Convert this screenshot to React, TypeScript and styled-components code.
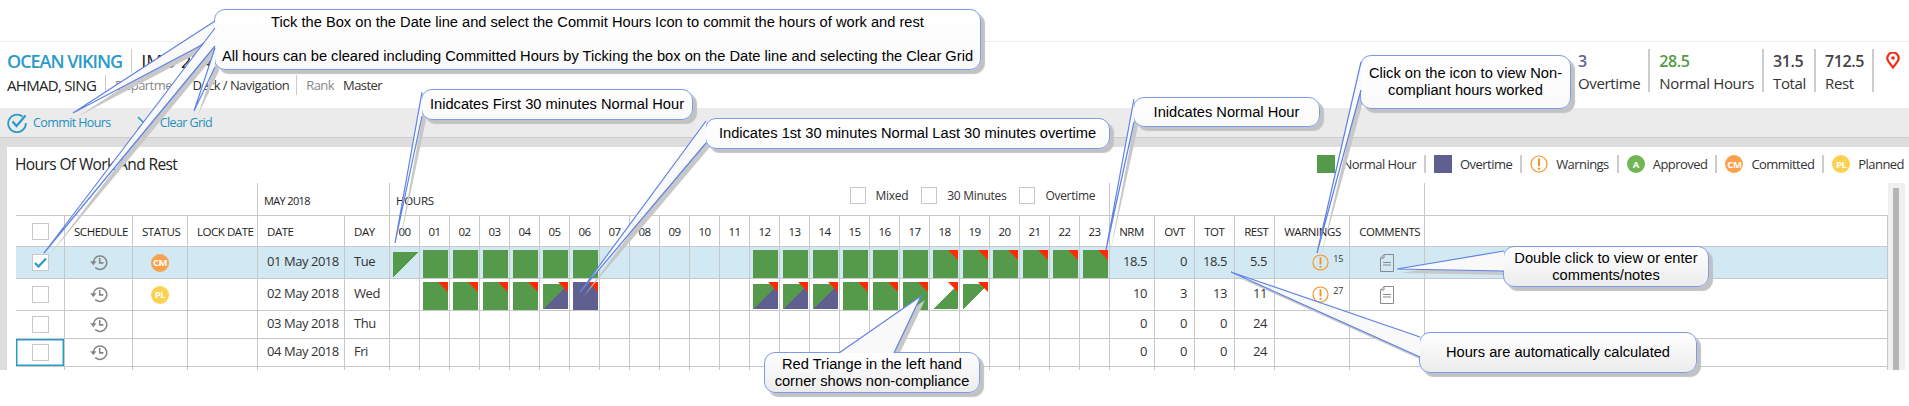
import React from "react";
import styled, { createGlobalStyle } from "styled-components";

const UI_FONT = `"Open Sans", "Noto Sans", sans-serif`;

const GlobalStyle = createGlobalStyle`
  html, body {
    margin: 0;
    padding: 0;
    background: #fff;
    font-family: ${UI_FONT};
    color: #222;
  }
`;

const Page = styled.div`
  position: relative;
  width: 1909px;
  height: 406px;
  overflow: hidden;
  background: #fff;
`;

const TopGap = styled.div`
  height: 42px;
  border-bottom: 1px solid #eee;
  box-sizing: border-box;
`;

const InfoBar = styled.header`
  display: flex;
  justify-content: space-between;
  height: 66px;
  padding: 7px 9px 0 7px;
  box-sizing: border-box;
`;

const InfoLeft = styled.div`
  display: flex;
  flex-direction: column;
`;

const InfoLine = styled.div`
  display: flex;
  align-items: center;
  height: 24px;
`;

const VesselName = styled.span`
  font-size: 18px;
  font-weight: 600;
  color: #2a9bc9;
  letter-spacing: -1px;
  padding-right: 9px;
  border-right: 1px solid #ccc;
  line-height: 24px;
`;

const VesselImo = styled.span`
  font-size: 18px;
  padding-left: 9px;
`;

const CrewName = styled.span`
  font-size: 15px;
  letter-spacing: -0.7px;
  padding-right: 9px;
  border-right: 1px solid #ccc;
  line-height: 20px;
`;

const FieldLabel = styled.span`
  font-size: 13px;
  letter-spacing: -0.55px;
  color: #888;
  margin: 0 9px;
`;

const FieldValue = styled.span<{ $divider?: boolean }>`
  font-size: 13px;
  letter-spacing: -0.55px;
  color: #333;
  line-height: 20px;
  ${(p) => p.$divider && "padding-right: 7px; border-right: 1px solid #ccc;"}
`;

const Stats = styled.div`
  display: flex;
  align-items: flex-start;
`;

const Stat = styled.div`
  height: 43px;
  padding: 0 8px 0 9px;
  border-right: 2px solid #ccc;
  display: flex;
  flex-direction: column;
  justify-content: space-between;
`;

const StatValue = styled.div<{ $color: string }>`
  font-size: 16px;
  font-weight: 600;
  line-height: 24px;
  color: ${(p) => p.$color};
  letter-spacing: -0.4px;
`;

const StatLabel = styled.div`
  font-size: 15px;
  line-height: 18px;
  letter-spacing: -0.35px;
  color: #333;
`;

const PinHolder = styled.div`
  margin: 3px 0 0 12px;
`;

const Toolbar = styled.div`
  display: flex;
  align-items: center;
  height: 30px;
  padding-left: 7px;
  box-sizing: border-box;
  background: #ebebeb;
  border-bottom: 1px solid #ccc;
`;

const ToolButton = styled.div<{ $width: number }>`
  display: flex;
  align-items: center;
  gap: 6px;
  width: ${(p) => p.$width}px;
  font-size: 12.5px;
  letter-spacing: -0.6px;
  color: #1f8fbf;
`;

const Workspace = styled.div`
  height: 232px;
  padding: 9px 0 0 7px;
  box-sizing: border-box;
  background: #ddd;
`;

const Panel = styled.section`
  height: 223px;
  background: #fff;
  display: flex;
  flex-direction: column;
`;

const PanelHead = styled.div`
  display: flex;
  justify-content: space-between;
  height: 36px;
  padding: 8px 5px 0 8px;
  box-sizing: border-box;
`;

const PanelTitle = styled.h2`
  margin: -2px 0 0;
  font-size: 15.5px;
  line-height: 22px;
  font-weight: 400;
  letter-spacing: -0.6px;
  color: #222;
`;

const Legend = styled.div`
  display: flex;
  align-items: center;
  height: 18px;
`;

const LegendItem = styled.div<{ $last?: boolean }>`
  display: flex;
  align-items: center;
  gap: 8px;
  height: 18px;
  padding: 0 ${(p) => (p.$last ? 0 : 8)}px 0 8px;
  font-size: 13px;
  letter-spacing: -0.55px;
  color: #333;
  ${(p) => !p.$last && "border-right: 2px solid #ccc;"}
`;

const Swatch = styled.span<{ $color: string }>`
  display: block;
  width: 18px;
  height: 18px;
  background: ${(p) => p.$color};
`;

const Badge = styled.span<{ $color: string; $size?: number }>`
  display: inline-flex;
  align-items: center;
  justify-content: center;
  width: ${(p) => p.$size ?? 18}px;
  height: ${(p) => p.$size ?? 18}px;
  border-radius: 50%;
  background: ${(p) => p.$color};
  color: #fff;
  font-size: 9.5px;
  font-weight: 700;
  letter-spacing: -0.4px;
`;

const GridRow = styled.div`
  display: flex;
  height: 187px;
  padding-left: 9px;
`;

const GridClip = styled.div`
  width: 1872px;
  height: 187px;
  overflow: hidden;
`;

const Grid = styled.table`
  width: 1872px;
  table-layout: fixed;
  border-collapse: separate;
  border-spacing: 0;
`;

const Scroller = styled.div`
  width: 17px;
  height: 187px;
  box-sizing: border-box;
  padding: 5px 6px 0 5px;
  background: #f0f0f0;
`;

const ScrollThumb = styled.div`
  height: 100%;
  background: #b5b5b5;
`;

const Band = styled.td<{ $line?: boolean }>`
  height: 33px;
  padding: 0;
  box-sizing: border-box;
  border-bottom: 1px solid #c8c8c8;
  ${(p) => p.$line && "border-right: 1px solid #c8c8c8;"}
  font-size: 11.5px;
  letter-spacing: -0.3px;
  vertical-align: top;
`;

const BandLabel = styled.div`
  padding: 10px 0 0 6px;
  font-size: 11px;
  letter-spacing: -0.65px;
  line-height: 16px;
  color: #222;
`;

const HoursBand = styled.div`
  display: flex;
  justify-content: space-between;
  padding: 4px 14px 0 6px;
`;

const HoursLabel = styled.div`
  padding-top: 6px;
  line-height: 16px;
  color: #222;
`;

const Filters = styled.div`
  display: flex;
  align-items: center;
  gap: 13px;
  height: 16px;
`;

const Filter = styled.label`
  display: flex;
  align-items: center;
  gap: 10px;
  font-size: 12px;
  letter-spacing: -0.3px;
  color: #333;
`;

const FilterBox = styled.span`
  display: block;
  width: 14px;
  height: 15px;
  border: 1px solid #c8c8c8;
`;

const HeadCell = styled.th<{ $center?: boolean }>`
  height: 31px;
  padding: 0 0 0 ${(p) => (p.$center ? 0 : 9)}px;
  box-sizing: border-box;
  border-right: 1px solid #c8c8c8;
  border-bottom: 1px solid #c8c8c8;
  font-size: 11.5px;
  font-weight: 400;
  letter-spacing: -0.45px;
  white-space: nowrap;
  text-align: ${(p) => (p.$center ? "center" : "left")};
  color: #222;
`;

const Row = styled.tr<{ $selected?: boolean }>`
  background: ${(p) => (p.$selected ? "#d2e9f3" : "transparent")};
`;

const Cell = styled.td<{ $h: number; $focused?: boolean }>`
  height: ${(p) => p.$h}px;
  padding: 0;
  box-sizing: border-box;
  border-right: 1px solid #c8c8c8;
  border-bottom: 1px solid #c8c8c8;
  vertical-align: middle;
  ${(p) => p.$focused && "box-shadow: inset 0 0 0 1.5px #2a9bc9;"}
`;

const CellInner = styled.div<{ $center?: boolean }>`
  display: flex;
  align-items: center;
  justify-content: ${(p) => (p.$center ? "center" : "flex-start")};
`;

const TextCell = styled(Cell)`
  padding: 0 0 3px 9px;
  font-size: 13px;
  letter-spacing: -0.45px;
  color: #333;
  white-space: nowrap;
`;

const NumberCell = styled(Cell)`
  padding: 0 7px 3px 0;
  font-size: 13px;
  letter-spacing: -0.4px;
  color: #333;
  text-align: right;
`;

const HourCell = styled(Cell)`
  padding: 3px 0 0 3px;
  vertical-align: top;
`;

const CheckBox = styled.span`
  display: flex;
  align-items: center;
  justify-content: center;
  width: 15px;
  height: 15px;
  border: 1px solid #c8c8c8;
  background: #fff;
`;

const HourBlock = styled.div<{ $fill: string; $flag?: boolean }>`
  position: relative;
  width: 25px;
  height: 28px;
  background-image: ${(p) => p.$fill};
  background-repeat: no-repeat;
  background-position: center;
  ${(p) =>
    p.$flag &&
    `&::after {
      content: "";
      position: absolute;
      top: 0;
      right: 0;
      width: 10px;
      height: 10px;
      background: #ff2a00;
      clip-path: polygon(0 0, 100% 0, 100% 100%);
    }`}
`;

const WarningWrap = styled.div`
  display: flex;
  align-items: flex-start;
  gap: 4px;
  padding-left: 37px;
`;

const WarningCount = styled.span`
  font-size: 9px;
  line-height: 10px;
  color: #333;
`;

const Callout = styled.div<{
  $left: number;
  $top: number;
  $w: number;
  $h: number;
  $shade?: boolean;
}>`
  position: absolute;
  left: ${(p) => p.$left}px;
  top: ${(p) => p.$top}px;
  width: ${(p) => p.$w}px;
  height: ${(p) => p.$h}px;
  box-sizing: border-box;
  display: flex;
  flex-direction: column;
  align-items: center;
  justify-content: center;
  border: 1.5px solid #7d9be6;
  border-radius: 11px;
  background: ${(p) =>
    p.$shade
      ? "linear-gradient(#ffffff, #ececec)"
      : "linear-gradient(#ffffff, #fafafa)"};
  box-shadow: 4px 4px 1px #c2c2c2;
  font-family: "Liberation Sans", Arial, sans-serif;
  font-size: 14.67px;
  line-height: 17px;
  text-align: center;
  color: #000;
`;

const CalloutLine = styled.div<{ $gap?: number }>`
  white-space: nowrap;
  margin-top: ${(p) => p.$gap ?? 0}px;
`;

const TailLayer = styled.svg`
  position: absolute;
  left: 0;
  top: 0;
  pointer-events: none;
`;

type Pt = [number, number];
const pts = (list: Pt[], dx = 0, dy = 0) =>
  list.map(([x, y]) => `${x + dx},${y + dy}`).join(" ");

const green = "#559a4a";
const purple = "#5f6090";
const fills = {
  normal: `linear-gradient(${green}, ${green})`,
  overtime: `linear-gradient(${purple}, ${purple})`,
};
const FULL = "100% 100%";
type Kind = "n" | "o" | "f" | "l" | "m";

const kindStyle = (k: Kind): { image: string; size: string } => {
  switch (k) {
    case "n":
      return { image: fills.normal, size: FULL };
    case "o":
      return { image: fills.overtime, size: FULL };
    case "f":
      return { image: `linear-gradient(to bottom right, ${green} 50%, transparent 50.5%)`, size: "100% 25px" };
    case "l":
      return { image: `linear-gradient(to bottom right, transparent 50%, ${green} 50.5%)`, size: "100% 25px" };
    case "m":
      return { image: `linear-gradient(to bottom right, ${green} 50%, ${purple} 50.5%)`, size: "100% 25px" };
  }
};

const Sized = styled(HourBlock)<{ $size: string }>`
  background-size: ${(p) => p.$size};
`;

interface DayRow {
  date: string;
  day: string;
  h: number;
  status?: "CM" | "PL";
  hours: Record<number, [Kind, boolean]>;
  nrm: string;
  ovt: string;
  tot: string;
  rest: string;
  warnings?: string;
  selected?: boolean;
  focused?: boolean;
}

const rowOneHours: DayRow["hours"] = { 0: ["f", false] };
[1, 2, 3, 4, 5, 6, 12, 13, 14, 15, 16, 17].forEach((i) => (rowOneHours[i] = ["n", false]));
[18, 19, 20, 21, 22, 23].forEach((i) => (rowOneHours[i] = ["n", true]));

const days: DayRow[] = [
  { date: "01 May 2018", day: "Tue", h: 32, status: "CM", hours: rowOneHours, nrm: "18.5", ovt: "0", tot: "18.5", rest: "5.5", warnings: "15", selected: true },
  {
    date: "02 May 2018",
    day: "Wed",
    h: 32,
    status: "PL",
    hours: {
      1: ["n", true], 2: ["n", true], 3: ["n", true], 4: ["n", true],
      5: ["m", true], 6: ["o", true],
      12: ["m", true], 13: ["m", true], 14: ["m", true],
      15: ["n", true], 16: ["n", true], 17: ["n", true],
      18: ["l", true], 19: ["f", true],
    },
    nrm: "10", ovt: "3", tot: "13", rest: "11", warnings: "27",
  },
  { date: "03 May 2018", day: "Thu", h: 28, hours: {}, nrm: "0", ovt: "0", tot: "0", rest: "24" },
  { date: "04 May 2018", day: "Fri", h: 28, hours: {}, nrm: "0", ovt: "0", tot: "0", rest: "24", focused: true },
];

const hourLabels = Array.from({ length: 24 }, (_, i) => String(i).padStart(2, "0"));
const colWidths = [49, 68, 55, 70, 87, 45, ...hourLabels.map(() => 30), 45, 40, 40, 40, 75, 75];

const HistoryIcon = () => (
  <svg width="19" height="19" viewBox="0 0 24 24" fill="none" stroke="#868686" strokeWidth="2">
    <path d="M5.500 11a8.500 8.500 0 1 1 3 7.800" strokeLinecap="round" />
    <path d="M1.500 10.500h8l-4 5z" fill="#868686" stroke="none" />
    <path d="M13.500 7v5.500h4" strokeLinecap="round" />
  </svg>
);

const WarningIcon = ({ size = 17 }: { size?: number }) => (
  <svg width={size} height={size} viewBox="0 0 18 18" fill="none">
    <circle cx="9" cy="9" r="8" stroke="#f7931e" strokeWidth="1.2" />
    <path d="M9 3.500v7.500" stroke="#f7931e" strokeWidth="2" />
    <circle cx="9" cy="13.600" r="1.200" fill="#f7931e" />
  </svg>
);

const NoteIcon = () => (
  <svg width="14" height="18" viewBox="0 0 14 18" fill="none" stroke="#8a8a8a" strokeWidth="1">
    <path d="M4 .5h9.500v17H.5V4z" />
    <path d="M4 .5V4H.5" />
    <path d="M3 8.500h8M3 11h8" />
  </svg>
);

const Tick = () => (
  <svg width="13" height="11" viewBox="0 0 13 11" fill="none">
    <path d="M1 6l3.500 3.500L12 1.500" stroke="#2a9bc9" strokeWidth="2.200" />
  </svg>
);

const CommitIcon = () => (
  <svg width="20" height="20" viewBox="0 0 20 20" fill="none" stroke="#2a9bc9" strokeWidth="1.800">
    <path d="M15.500 3.500A8.800 8.800 0 1 0 18.800 10" />
    <path d="M5.500 8.500l4 4.500L18.500 2.500" strokeWidth="2.200" />
  </svg>
);

const ClearIcon = () => (
  <svg width="14" height="14" viewBox="0 0 14 14" fill="none" stroke="#2a9bc9" strokeWidth="1.600">
    <path d="M1 1l12 12M13 1L1 13" />
  </svg>
);

const PinIcon = () => (
  <svg width="14" height="17" viewBox="0 0 14 17" fill="none">
    <path d="M7 15.500C4 11.500 1.300 9 1.300 6.200a5.700 5.700 0 0 1 11.400 0C12.700 9 10 11.500 7 15.500z" stroke="#f7280f" strokeWidth="2.200" />
    <circle cx="7" cy="6" r="1.800" fill="#f7280f" />
  </svg>
);

const tails: Pt[][] = [
  [[215, 21], [73, 113], [198, 47], [215, 36]],
  [[215, 28], [44, 253], [215, 46]],
  [[215, 48], [194, 111], [215, 67]],
  [[422, 92], [395, 243], [422, 116]],
  [[706, 121], [580, 292], [706, 143]],
  [[1134, 99], [1106, 250], [1134, 122]],
  [[1361, 62], [1317, 253], [1361, 90]],
  [[1504, 251], [1397, 269], [1504, 271]],
  [[1420, 337], [1231, 272], [1420, 357]],
  [[839, 353], [921, 296], [894, 353]],
];

interface CalloutData {
  left: number;
  top: number;
  w: number;
  h: number;
  lines: string[];
  shade?: boolean;
  gap?: number;
}

const callouts: CalloutData[] = [
  {
    left: 214, top: 9, w: 767, h: 61, gap: 17,
    lines: [
      "Tick the Box on the Date line and select the Commit Hours Icon to commit the hours of work and rest",
      "All hours can be cleared including Committed Hours by Ticking the box on the Date line and selecting the Clear Grid",
    ],
  },
  { left: 421, top: 89, w: 272, h: 31, lines: ["Inidcates First 30 minutes Normal Hour"] },
  { left: 705, top: 118, w: 405, h: 31, lines: ["Indicates 1st 30 minutes Normal Last 30 minutes overtime"] },
  { left: 1133, top: 97, w: 187, h: 30, lines: ["Inidcates Normal Hour"] },
  { left: 1360, top: 55, w: 211, h: 54, lines: ["Click on the icon to view Non-", "compliant hours worked"] },
  { left: 1503, top: 246, w: 206, h: 41, shade: true, lines: ["Double click to view or enter", "comments/notes"] },
  { left: 1419, top: 332, w: 278, h: 41, shade: true, lines: ["Hours are automatically calculated"] },
  { left: 764, top: 352, w: 216, h: 41, shade: true, lines: ["Red Triange in the left hand", "corner shows non-compliance"] },
];

export default function App() {
  return (
    <Page>
      <GlobalStyle />
      <TopGap />
      <InfoBar>
        <InfoLeft>
          <InfoLine>
            <VesselName>OCEAN VIKING</VesselName>
            <VesselImo>IMO 2248</VesselImo>
          </InfoLine>
          <InfoLine>
            <CrewName>AHMAD, SING</CrewName>
            <FieldLabel>Department</FieldLabel>
            <FieldValue $divider>Deck / Navigation</FieldValue>
            <FieldLabel>Rank</FieldLabel>
            <FieldValue>Master</FieldValue>
          </InfoLine>
        </InfoLeft>
        <Stats>
          <Stat>
            <StatValue $color={purple}>3</StatValue>
            <StatLabel>Overtime</StatLabel>
          </Stat>
          <Stat>
            <StatValue $color={green}>28.5</StatValue>
            <StatLabel>Normal Hours</StatLabel>
          </Stat>
          <Stat>
            <StatValue $color="#444">31.5</StatValue>
            <StatLabel>Total</StatLabel>
          </Stat>
          <Stat>
            <StatValue $color="#444">712.5</StatValue>
            <StatLabel>Rest</StatLabel>
          </Stat>
          <PinHolder>
            <PinIcon />
          </PinHolder>
        </Stats>
      </InfoBar>
      <Toolbar>
        <ToolButton $width={130}>
          <CommitIcon />
          Commit Hours
        </ToolButton>
        <ToolButton $width={90}>
          <ClearIcon />
          <span>&nbsp;Clear Grid</span>
        </ToolButton>
      </Toolbar>
      <Workspace>
        <Panel>
          <PanelHead>
            <PanelTitle>Hours Of Work And Rest</PanelTitle>
            <Legend>
              <LegendItem>
                <Swatch $color={green} />
                Normal Hour
              </LegendItem>
              <LegendItem>
                <Swatch $color={purple} />
                Overtime
              </LegendItem>
              <LegendItem>
                <WarningIcon size={18} />
                Warnings
              </LegendItem>
              <LegendItem>
                <Badge $color="#72b554">A</Badge>
                Approved
              </LegendItem>
              <LegendItem>
                <Badge $color="#f9a14b">CM</Badge>
                Committed
              </LegendItem>
              <LegendItem $last>
                <Badge $color="#fdd14f">PL</Badge>
                Planned
              </LegendItem>
            </Legend>
          </PanelHead>
          <GridRow>
            <GridClip>
              <Grid>
                <colgroup>
                  {colWidths.map((w, i) => (
                    <col key={i} width={w} />
                  ))}
                  <col />
                </colgroup>
                <tbody>
                  <tr>
                    <Band colSpan={4} $line />
                    <Band colSpan={2} $line>
                      <BandLabel>MAY 2018</BandLabel>
                    </Band>
                    <Band colSpan={24} $line>
                      <HoursBand>
                        <HoursLabel>HOURS</HoursLabel>
                        <Filters>
                          <Filter>
                            <FilterBox />
                            Mixed
                          </Filter>
                          <Filter>
                            <FilterBox />
                            30 Minutes
                          </Filter>
                          <Filter>
                            <FilterBox />
                            Overtime
                          </Filter>
                        </Filters>
                      </HoursBand>
                    </Band>
                    <Band colSpan={6} $line />
                    <Band />
                  </tr>
                  <tr>
                    <HeadCell $center>
                      <CellInner $center>
                        <CheckBox />
                      </CellInner>
                    </HeadCell>
                    {["SCHEDULE", "STATUS", "LOCK DATE", "DATE", "DAY"].map((t) => (
                      <HeadCell key={t}>{t}</HeadCell>
                    ))}
                    {hourLabels.map((t) => (
                      <HeadCell key={t} $center>
                        {t}
                      </HeadCell>
                    ))}
                    {["NRM", "OVT", "TOT", "REST", "WARNINGS", "COMMENTS"].map((t) => (
                      <HeadCell key={t}>{t}</HeadCell>
                    ))}
                    <HeadCell />
                  </tr>
                  {days.map((d) => (
                    <Row key={d.date} $selected={d.selected}>
                      <Cell $h={d.h} $focused={d.focused}>
                        <CellInner $center>
                          <CheckBox>{d.selected && <Tick />}</CheckBox>
                        </CellInner>
                      </Cell>
                      <Cell $h={d.h}>
                        <CellInner $center>
                          <HistoryIcon />
                        </CellInner>
                      </Cell>
                      <Cell $h={d.h}>
                        <CellInner $center>
                          {d.status && (
                            <Badge $color={d.status === "CM" ? "#f9a14b" : "#fdd14f"}>{d.status}</Badge>
                          )}
                        </CellInner>
                      </Cell>
                      <Cell $h={d.h} />
                      <TextCell $h={d.h}>{d.date}</TextCell>
                      <TextCell $h={d.h}>{d.day}</TextCell>
                      {hourLabels.map((_, i) => {
                        const entry = d.hours[i];
                        if (!entry) return <Cell key={i} $h={d.h} />;
                        const look = kindStyle(entry[0]);
                        return (
                          <HourCell key={i} $h={d.h}>
                            <Sized $fill={look.image} $size={look.size} $flag={entry[1]} />
                          </HourCell>
                        );
                      })}
                      <NumberCell $h={d.h}>{d.nrm}</NumberCell>
                      <NumberCell $h={d.h}>{d.ovt}</NumberCell>
                      <NumberCell $h={d.h}>{d.tot}</NumberCell>
                      <NumberCell $h={d.h}>{d.rest}</NumberCell>
                      <Cell $h={d.h}>
                        {d.warnings && (
                          <WarningWrap>
                            <WarningIcon />
                            <WarningCount>{d.warnings}</WarningCount>
                          </WarningWrap>
                        )}
                      </Cell>
                      <Cell $h={d.h}>
                        {d.warnings && (
                          <CellInner $center>
                            <NoteIcon />
                          </CellInner>
                        )}
                      </Cell>
                      <Cell $h={d.h} />
                    </Row>
                  ))}
                  <tr>
                    {[...colWidths, 0].map((_, i) => (
                      <Cell key={i} $h={28} />
                    ))}
                  </tr>
                </tbody>
              </Grid>
            </GridClip>
            <Scroller>
              <ScrollThumb />
            </Scroller>
          </GridRow>
        </Panel>
      </Workspace>

      <TailLayer width="1909" height="406">
        {tails.map((t, i) => (
          <polygon key={i} points={pts(t, 4, 4)} fill="#c8c8c8" />
        ))}
      </TailLayer>
      {callouts.map((c) => (
        <Callout key={c.lines[0]} $left={c.left} $top={c.top} $w={c.w} $h={c.h} $shade={c.shade}>
          {c.lines.map((l, i) => (
            <CalloutLine key={l} $gap={i > 0 ? c.gap : 0}>
              {l}
            </CalloutLine>
          ))}
        </Callout>
      ))}
      <TailLayer width="1909" height="406">
        {tails.map((t, i) => (
          <g key={i}>
            <polygon points={pts(t)} fill="#f9f9f9" />
            <polyline points={pts(t)} fill="none" stroke="#5f82e4" strokeWidth="1.200" />
          </g>
        ))}
      </TailLayer>
    </Page>
  );
}
